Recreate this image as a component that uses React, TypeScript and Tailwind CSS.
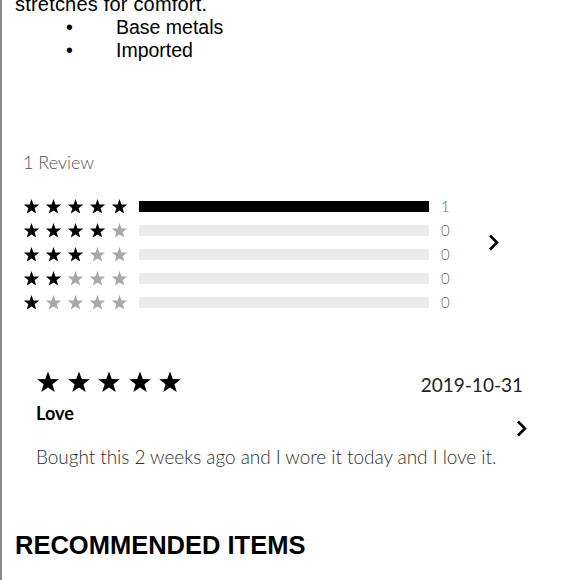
import React from "react";

function Star({ size, filled }: { size: number; filled: boolean }) {
  return (
    <svg width={size} height={size} viewBox="0 0 24 24" className={filled ? "fill-black" : "fill-[#a8a8a8]"}>
      <path d="M12 1.5l2.75 7.6 8.05.25-6.35 4.95 2.25 7.75L12 17.5l-6.7 4.55 2.25-7.75L1.2 9.35l8.05-.25z" />
    </svg>
  );
}

function Chevron() {
  return (
    <svg width="12" height="17" viewBox="0 0 12 17" fill="none" stroke="black" strokeWidth="2.6">
      <path d="M2 1.5l7 7-7 7" />
    </svg>
  );
}

export default function App() {
  const rows = [
    { stars: 5, count: 1 },
    { stars: 4, count: 0 },
    { stars: 3, count: 0 },
    { stars: 2, count: 0 },
    { stars: 1, count: 0 },
  ];

  return (
    <div className="min-h-[580px] overflow-hidden border-l-2 border-[#8a8a8a] bg-white">
      {/* description tail */}
      <div className="-mt-[7px] pl-[13px] font-['Liberation_Sans',Arial,sans-serif] text-[19.5px] leading-[23px] text-black">
        <p className="text-[20px] tracking-[0.2px]">stretches for comfort.</p>
        {["Base metals", "Imported"].map((item) => (
          <div key={item} className="flex">
            <span className="w-[101px] pl-[51px]">•</span>
            <span>{item}</span>
          </div>
        ))}
      </div>

      <div className="font-['Lato',sans-serif]">
        {/* summary */}
        <div className="mt-[88px] pl-[21px]">
          <p className="text-[18px] font-light leading-6 text-[#555]">1 Review</p>
          <div className="mt-5 flex items-center">
            <div>
              {rows.map((row) => (
                <div key={row.stars} className="flex h-6 items-center">
                  <div className="flex w-[116px] gap-[5px]">
                    {[1, 2, 3, 4, 5].map((i) => (
                      <Star key={i} size={17} filled={i <= row.stars} />
                    ))}
                  </div>
                  <div className={`h-[11px] w-[290px] ${row.count > 0 ? "bg-black" : "bg-[#ebebeb]"}`} />
                  <span className="ml-3 text-[15px] font-light text-[#666]">{row.count}</span>
                </div>
              ))}
            </div>
            <div className="mb-6 ml-[38px]">
              <Chevron />
            </div>
          </div>
        </div>

        {/* single review */}
        <div className="mt-[53px] pl-[34px] pr-[52px]">
          <div className="flex h-[30px] items-center justify-between">
            <div className="flex gap-[6.5px]">
              {[1, 2, 3, 4, 5].map((i) => (
                <Star key={i} size={24} filled />
              ))}
            </div>
            <span className="mr-[5px] mt-[6px] text-[19px] text-[#222]">2019-10-31</span>
          </div>
          <div className="mt-1 flex items-start justify-between">
            <span className="text-[18px] font-bold leading-6 text-black">Love</span>
            <div className="mt-[19px]">
              <Chevron />
            </div>
          </div>
          <p className="mt-[7px] text-[19px] font-light leading-[26px] tracking-[-0.05px] text-[#2e2e2e]">
            Bought this 2 weeks ago and I wore it today and I love it.
          </p>
        </div>
      </div>

      <h2 className="mt-[60px] pl-[13px] font-['Liberation_Sans',Arial,sans-serif] text-[25.5px] font-bold leading-[30px] text-black">
        RECOMMENDED ITEMS
      </h2>
    </div>
  );
}
